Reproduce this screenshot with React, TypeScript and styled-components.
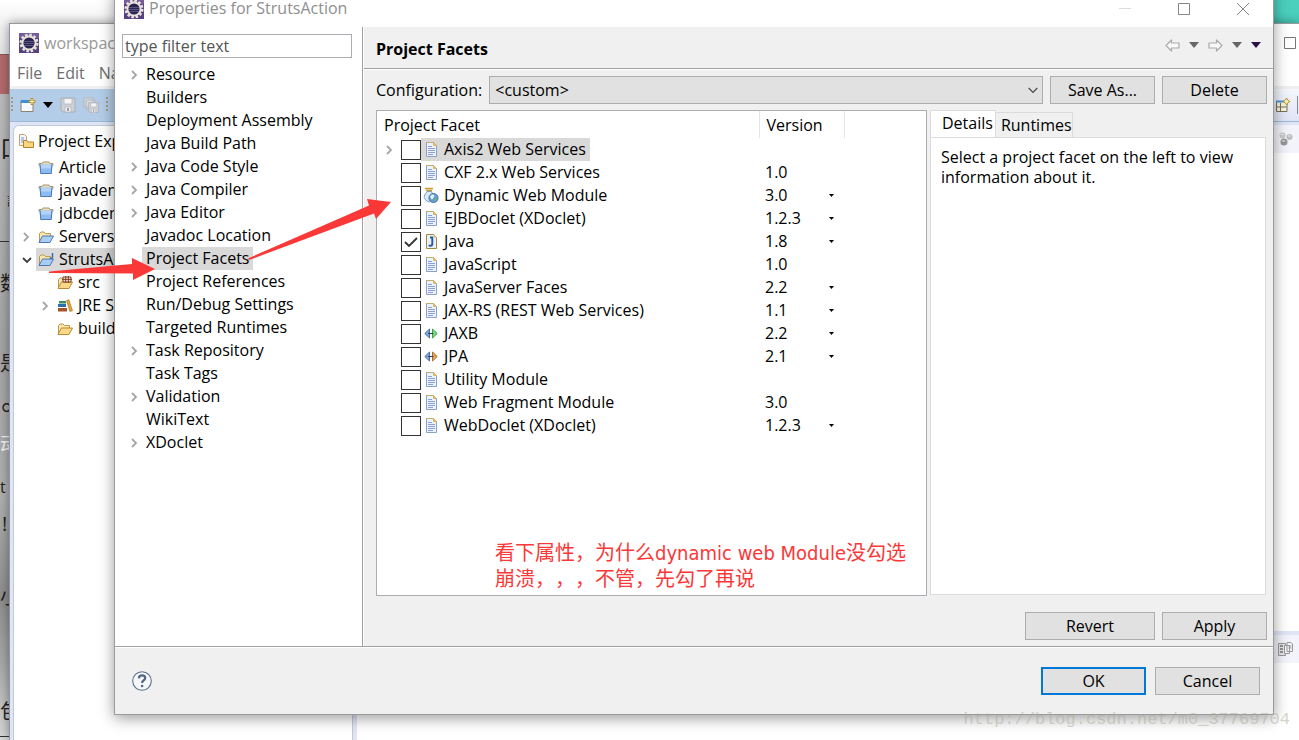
import React, { useState } from "react";
import styled, { createGlobalStyle, css } from "styled-components";

const Global = createGlobalStyle`
  * { box-sizing: border-box; }
  html, body { margin: 0; }
  body {
    font-family: "Open Sans", "Noto Sans", "Noto Sans CJK SC", sans-serif;
    font-size: 16px;
    line-height: 23px;
    color: #000;
  }
  button, input, select { font: inherit; color: inherit; margin: 0; }
  ul { list-style: none; margin: 0; padding: 0; }
`;

const Desktop = styled.div`
  position: relative;
  min-height: 100vh;
  overflow: hidden;
  background: #fff;
`;

/* ---------- page that lies behind everything ---------- */

const WebPage = styled.div`
  display: flex;
  flex-direction: column;
  min-height: 100vh;
`;

const PageTop = styled.div`
  display: flex;
  justify-content: flex-end;
  height: 54px;
  background: linear-gradient(#fff, #e4e4e4);
`;

const Teal = styled.div`
  width: 120px;
  height: 24px;
  background: #4bd0be;
`;

const PageBanner = styled.div`
  height: 40px;
  background: #b36b6b;
  border-top: 1px solid #8d5555;
`;

const PageText = styled.div`
  flex: 1;
  white-space: nowrap;
  background: linear-gradient(#bcbcbc, #a4a4a4 40%, #b0b0b0 62%, #8e8e8e 78%, #a8a8a8 88%, #d8d8d8);
`;

const PageLine = styled.div<{
  $h: number;
  $above?: number;
  $size?: number;
  $pad?: number;
  $light?: boolean;
  $rule?: boolean;
}>`
  display: flex;
  align-items: center;
  height: ${(p) => p.$h}px;
  margin-top: ${(p) => p.$above ?? 0}px;
  padding-left: ${(p) => p.$pad ?? 0}px;
  font-size: ${(p) => p.$size ?? 20}px;
  color: ${(p) => (p.$light ? "#f4f4f4" : "#222")};
  border-bottom: ${(p) => (p.$rule ? "1px solid #333" : "0")};
`;

/* ---------- workspace window ---------- */

const Workspace = styled.section`
  position: absolute;
  top: 23px;
  left: 9px;
  right: 0;
  bottom: 0;
  display: flex;
  flex-direction: column;
  background: #fff;
  border-top: 1px solid #9a9a9a;
  border-left: 1px solid #8d94a8;
  box-shadow: 0 0 10px rgba(0, 0, 0, 0.4);
`;

const WsTitle = styled.header`
  display: flex;
  align-items: center;
  justify-content: space-between;
  height: 38px;
  padding: 0 3px 0 9px;
  color: #999;
`;

const IconText = styled.span<{ $gap: number }>`
  display: flex;
  align-items: center;
  gap: ${(p) => p.$gap}px;
`;

const Menu = styled.nav`
  display: flex;
  gap: 14px;
  height: 24px;
  padding-left: 7px;
  color: #6d6d6d;
`;

const Toolbar = styled.div`
  display: flex;
  align-items: center;
  justify-content: space-between;
  height: 36px;
  padding: 0 1px;
  border-top: 3px solid #f0f0f0;
  border-bottom: 1px solid #9db9da;
  background: linear-gradient(90deg, #b3cde8 60%, transparent 85%), linear-gradient(#f5f7fd, #dfe4f5);
`;

const ToolGroup = styled.div`
  display: flex;
  align-items: center;
  gap: 7px;
`;

const Handle = styled.span`
  width: 2px;
  height: 16px;
  background: repeating-linear-gradient(#a89b78 0 2px, transparent 2px 4px);
`;

const ToolRule = styled.span`
  width: 1px;
  height: 18px;
  background: #8a8a96;
`;

const WsBody = styled.div`
  flex: 1;
  display: grid;
  grid-template-columns: 340px 1fr;
  gap: 4px;
  padding: 3px 0 0 3px;
  background: #e0e5f6;
`;

const Explorer = styled.div`
  background: #fff;
  border: 1px solid #c3c9d8;
  border-bottom: 0;
  border-radius: 6px 0 0 0;
`;

const ExplorerTab = styled.div`
  display: flex;
  align-items: center;
  gap: 4px;
  height: 30px;
  padding-left: 4px;
  white-space: nowrap;
`;

const WsRow = styled.li<{ $child?: boolean }>`
  display: flex;
  align-items: center;
  height: 23px;
  padding-left: ${(p) => (p.$child ? 27 : 8)}px;
  white-space: nowrap;
`;

const WsLabel = styled.span<{ $on?: boolean }>`
  display: flex;
  align-items: center;
  gap: 5px;
  padding: 0 4px 0 2px;
  background: ${(p) => (p.$on ? "#d9d9d9" : "transparent")};
`;

const Twisty = styled.span`
  display: flex;
  flex: none;
  align-items: center;
  width: 14px;
`;

const WsEditors = styled.div`
  display: flex;
  flex-direction: column;
`;

const EditorPane = styled.div<{ $grow?: boolean }>`
  ${(p) => (p.$grow ? css`flex: 1; margin-bottom: 4px;` : css`height: 105px;`)}
  background: #fff;
`;

const PaneTabs = styled.div`
  display: flex;
  align-items: center;
  justify-content: flex-end;
  height: 28px;
  padding-right: 6px;
  background: #f3f4fb;
`;

/* ---------- dialog ---------- */

const Dialog = styled.section`
  position: absolute;
  top: -11px;
  left: 114px;
  right: 25px;
  background: #f0f0f0;
  border: 1px solid #9b9b9b;
  box-shadow: 0 3px 14px rgba(0, 0, 0, 0.4);
`;

const TitleBar = styled.header`
  display: flex;
  align-items: center;
  justify-content: space-between;
  height: 37px;
  padding: 0 23px 0 9px;
  background: #fff;
  color: #8f8f8f;
`;

const WindowControls = styled.div`
  display: flex;
  gap: 45px;
`;

const PlainButton = styled.button`
  display: flex;
  align-items: center;
  justify-content: center;
  padding: 0;
  border: 0;
  background: none;
`;

const Columns = styled.div`
  display: grid;
  grid-template-columns: 248px minmax(0, 1fr);
  border-bottom: 1px solid #a0a0a0;
`;

const Side = styled.aside`
  padding: 7px 10px 0 7px;
  background: #fff;
  border-right: 1px solid #a0a0a0;
`;

const Filter = styled.input`
  display: block;
  width: 100%;
  height: 24px;
  margin-bottom: 5px;
  padding: 0 2px;
  border: 1px solid #abadb3;
  outline: 0;
  color: #555;
`;

const NavRow = styled.li`
  display: flex;
  align-items: center;
  height: 23px;
  padding-left: 8px;
`;

const NavLink = styled.a<{ $on?: boolean }>`
  padding: 0 4px;
  margin-left: -2px;
  color: #000;
  text-decoration: none;
  background: ${(p) => (p.$on ? "#d9d9d9" : "transparent")};
`;

const Main = styled.main`
  border-left: 1px solid #fff;
`;

const PageHead = styled.div`
  display: flex;
  align-items: center;
  justify-content: space-between;
  height: 42px;
  padding: 3px 12px 0;
  border-bottom: 1px solid #a0a0a0;
`;

const Heading = styled.h1`
  margin: 0;
  font-size: 16px;
  font-weight: 700;
`;

const History = styled.div`
  display: flex;
  align-items: center;
  gap: 9px;
  padding-bottom: 8px;
`;

const Form = styled.div`
  padding: 6px 6px 6px 12px;
  border-top: 1px solid #fff;
`;

const ConfigRow = styled.div`
  display: flex;
  align-items: center;
  gap: 7px;
  margin-bottom: 6px;
`;

const SelectWrap = styled.div`
  position: relative;
  flex: 1;
`;

const Select = styled.select`
  display: block;
  width: 100%;
  height: 28px;
  padding: 0 5px;
  appearance: none;
  border: 1px solid #adadad;
  border-radius: 0;
  background: #e1e1e1;
`;

const SelectArrow = styled.span`
  position: absolute;
  top: 11px;
  right: 5px;
  display: flex;
  pointer-events: none;
`;

const Push = styled.button<{ $wide?: boolean; $primary?: boolean }>`
  width: ${(p) => (p.$wide ? 130 : 105)}px;
  height: 28px;
  padding: 0;
  border: ${(p) => (p.$primary ? "2px solid #0078d7" : "1px solid #adadad")};
  background: #e1e1e1;
`;

const Panels = styled.div`
  display: grid;
  grid-template-columns: minmax(0, 1fr) 337px;
  gap: 3px;
  min-height: 486px;
`;

const TableBox = styled.div`
  position: relative;
  border: 1px solid #abadb3;
  background: #fff;
`;

const FacetTable = styled.table`
  width: 467px;
  border-collapse: collapse;
  table-layout: fixed;

  th, td { padding: 0; }
  th {
    height: 27px;
    padding: 1px 0 0 7px;
    text-align: left;
    font-weight: 400;
  }
`;

const HeadCell = styled.th<{ $w: number }>`
  width: ${(p) => p.$w}px;
  border-right: 1px solid #e5e5e5;
`;

const FacetCell = styled.div`
  display: flex;
  align-items: center;
  height: 23px;
  padding-left: 8px;
`;

const Check = styled.input`
  flex: none;
  width: 20px;
  height: 20px;
  margin: 0 0 0 2px;
  appearance: none;
  border: 1px solid #333;
  background: #fff;

  &:checked {
    background: #fff url("data:image/svg+xml,%3Csvg xmlns='http://www.w3.org/2000/svg' viewBox='0 0 18 18'%3E%3Cpath d='M3 9l4 4 8-8' fill='none' stroke='%23333' stroke-width='1.8'/%3E%3C/svg%3E") center / 18px no-repeat;
  }
`;

const FacetLabel = styled.label<{ $on?: boolean }>`
  display: flex;
  align-items: center;
  gap: 5px;
  height: 23px;
  padding: 0 4px 0 2px;
  background: ${(p) => (p.$on ? "#d9d9d9" : "transparent")};
`;

const VersionCell = styled.div`
  display: flex;
  align-items: center;
  justify-content: space-between;
  height: 23px;
  padding: 0 10px 0 6px;
`;

const Note = styled.p`
  position: absolute;
  left: 118px;
  bottom: 3px;
  margin: 0;
  font-family: "DejaVu Sans Condensed", "Noto Sans CJK SC", sans-serif;
  font-size: 20px;
  line-height: 26px;
  text-spacing-trim: space-all;
  white-space: nowrap;
  color: #fb3838;
`;

const Details = styled.div`
  display: flex;
  flex-direction: column;
`;

const TabList = styled.div`
  display: flex;
  align-items: flex-end;
  height: 28px;
  margin-bottom: -1px;
`;

const Tab = styled.button<{ $on?: boolean }>`
  height: ${(p) => (p.$on ? 28 : 26)}px;
  padding: ${(p) => (p.$on ? "0 2px 2px 11px" : "0 0 0 5px")};
  border: 1px solid #dcdcdc;
  border-left-width: ${(p) => (p.$on ? 1 : 0)}px;
  border-bottom-color: ${(p) => (p.$on ? "#fff" : "#dcdcdc")};
  background: ${(p) => (p.$on ? "#fff" : "#f0f0f0")};
`;

const TabPanel = styled.div`
  flex: 1;
  margin: 0 1px 1px 0;
  padding: 9px 10px;
  border: 1px solid #dcdcdc;
  background: #fff;
  line-height: 20px;
`;

const Actions = styled.div`
  display: flex;
  justify-content: flex-end;
  gap: 7px;
  margin-top: 16px;
`;

const Footer = styled.footer`
  display: flex;
  align-items: center;
  height: 67px;
  padding: 0 13px 0 17px;
  gap: 9px;
  border-top: 1px solid #fff;
`;

const Spacer = styled.span`
  flex: 1;
`;

const Arrows = styled.svg`
  position: absolute;
  top: 0;
  left: 0;
  pointer-events: none;
`;

const Watermark = styled.span`
  position: absolute;
  right: 9px;
  bottom: 9px;
  font-family: "Liberation Mono", monospace;
  font-size: 17px;
  color: rgba(170, 170, 155, 0.5);
`;

/* ---------- drawings ---------- */

const EclipseIcon = () => (
  <svg width="20" height="20" viewBox="0 0 20 20">
    <rect width="20" height="20" fill="#55417f" />
    <rect width="20" height="5" fill="#8a6fae" opacity=".6" />
    <circle cx="10" cy="10" r="8.3" fill="none" stroke="#e8e4dc" strokeWidth="2.4" strokeDasharray="2.6 1.75" />
    <circle cx="10" cy="10" r="6.600" fill="#2b2350" stroke="#e8e4dc" strokeWidth="2" />
    <path d="M5 8.5h10M4.800 10.5h10.400M5 12.5h10" stroke="#6b638f" strokeWidth=".8" />
  </svg>
);

const Chevron = ({ open }: { open?: boolean }) =>
  open ? (
    <svg width="10" height="8" viewBox="0 0 10 8">
      <path d="M1 2l4 4 4-4" fill="none" stroke="#404040" strokeWidth="1.8" />
    </svg>
  ) : (
    <svg width="8" height="10" viewBox="0 0 8 10">
      <path d="M2 1l4 4-4 4" fill="none" stroke="#a6a6a6" strokeWidth="1.8" />
    </svg>
  );

const DocIcon = () => (
  <svg width="13" height="15" viewBox="0 0 13 15">
    <path d="M1.5.5h7l3 3v11h-10z" fill="#eaf3fd" stroke="#8da0c6" />
    <path d="M1 .5h7.5l3 3" fill="none" stroke="#c5ae6c" />
    <path d="M8.5.5v3h3z" fill="#e6c06a" stroke="#c9a64c" strokeWidth=".6" />
    <path d="M3 4.5h4M3 6.5h7M3 8.5h7M3 10.5h7M3 12.5h5" stroke="#8f9fd0" />
  </svg>
);

const JavaIcon = () => (
  <svg width="13" height="15" viewBox="0 0 13 15">
    <path d="M1.5.5h7l3 3v11h-10z" fill="#e8f1fc" stroke="#a5863c" />
    <path d="M8.5.5v3h3z" fill="#e6c06a" />
    <path d="M5 3.5h3M7.3 3.5v6.3q0 2-1.8 2-1 0-1.8-.7" fill="none" stroke="#255a9c" strokeWidth="1.9" />
  </svg>
);

const WebIcon = () => (
  <svg width="16" height="17" viewBox="0 0 16 17">
    <path d="M2 1.5h8M3 3.500h6" stroke="#c89d2f" strokeWidth="1.5" />
    <path d="M4 4.500q0 1.600-2 2.600a5 5 0 1 0 8.500 0q-2-1-2-2.600z" fill="#dbe9f8" stroke="#829fc8" />
    <circle cx="10.5" cy="11" r="4.6" fill="#5f9bd5" stroke="#40699e" strokeWidth=".8" />
    <path d="M7 9.600q2-3.200 4.200-1.400.8 2-1 2.600-.4 2.200-1.800 1.400z" fill="#e4f2ea" />
    <path d="M11.700 11.200l2.200-.4-.8 2.600-1.600.6z" fill="#6fb56b" />
  </svg>
);

const LinkIcon = ({ right, edge }: { right: string; edge: string }) => (
  <svg width="14" height="11" viewBox="0 0 14 11">
    <path d="M.8 5.500l4.700-4.500v9z" fill="#7fa8e0" stroke="#3d62a0" strokeWidth=".9" />
    <path d="M13.200 5.500L8.500 1v9z" fill={right} stroke={edge} strokeWidth=".9" />
    <path d="M4 5.500h5.500" stroke="#333f60" strokeWidth="1.100" />
  </svg>
);

const ClosedProject = () => (
  <svg width="16" height="14" viewBox="0 0 16 14">
    <path d="M1 4.500V2.500h3L5 1h6l1 1.500h3v2" fill="#e9dfc4" stroke="#a39470" />
    <path d="M1.500 3.500h13L13.500 13h-11z" fill="#8dbcf0" />
    <path d="M2 3.500L2.800 12.500h10.400L14 3.500" fill="none" stroke="#4a78bd" />
    <path d="M3 4h10v3.500H3z" fill="#b4d5f9" />
  </svg>
);

const Folder = ({ blue, mark }: { blue?: boolean; mark?: "j" | "grid" }) => {
  const line = blue ? "#4f76b5" : "#b98a33";
  return (
    <svg width="16" height="14" viewBox="0 0 16 14">
      <path d="M1.5 12V3.5l1.5-1.5h3l1.5 1.5h5V6" fill="#fbe8ab" stroke="#b79854" />
      <path d="M1 12.5L4.5 6h11l-3.5 6.5z" fill={blue ? "#a9cef5" : "#fbd988"} stroke={line} />
      {mark === "j" && <path d="M14.5 0v4q0 1.8-2.8 1.3" fill="none" stroke="#3568b0" strokeWidth="1.4" />}
      {mark === "grid" && (
        <path d="M6 1h8v5H6zM8.7 0v7M11.4 0v7M5 3.4h10" fill="#f7e3cd" stroke="#7a3f25" strokeWidth="1" />
      )}
    </svg>
  );
};

const BooksIcon = () => (
  <svg width="16" height="14" viewBox="0 0 16 14">
    <path d="M2 2h7v2.5H2z" fill="#3d8b63" />
    <path d="M1 5h8v3H1z" fill="#2d6ea8" />
    <path d="M1 9h9v3.5H1z" fill="#a3562b" />
    <path d="M9.5 1.5l2.4-.8 3.6 11-2.6.8z" fill="#e2a43b" stroke="#a96c16" strokeWidth=".6" />
  </svg>
);

const ExplorerIcon = () => (
  <svg width="16" height="16" viewBox="0 0 16 16">
    <path d="M1.5 1.5h5l2 2v9h-7z" fill="#eef5fd" stroke="#c2a468" />
    <path d="M3 5h3M3 7h3M3 9h3" stroke="#7e9bd0" />
    <path d="M5.500 14.500v-7h3.500l1 1.500h5.500v5.500z" fill="#fbd67c" stroke="#b5832d" />
  </svg>
);

const NewIcon = () => (
  <svg width="16" height="14" viewBox="0 0 16 14">
    <path d="M1 2.500h12v11H1z" fill="#f5f9fe" stroke="#8b8468" />
    <path d="M1 2h10v3H1z" fill="#3f90d2" />
    <path d="M12 0v7M8.500 3.500h7" stroke="#b88d23" strokeWidth="2.600" />
    <path d="M12 1v5M9.500 3.500h5" stroke="#fff3bd" />
  </svg>
);

const SaveIcon = ({ all }: { all?: boolean }) => (
  <svg width="16" height="16" viewBox="0 0 16 16">
    {all && <path d="M1 1h9v9H1zM3 3h9v9H3z" fill="#d9dde2" stroke="#b2b6bb" />}
    <g transform={all ? "translate(5 5) scale(.7)" : undefined}>
      <path d="M1 1h14v14H3l-2-2z" fill="#cdd1d6" stroke="#aaaeb4" />
      <path d="M4 1.500h8V7H4zM5 10h6v5H5z" fill="#f3f4f5" stroke="#b2b6bb" strokeWidth=".8" />
      <path d="M7 11h2v3H7z" fill="#9a9ea5" />
    </g>
  </svg>
);

const ScreenIcon = () => (
  <svg width="16" height="14" viewBox="0 0 16 14">
    <path d="M0 1h15v9H0z" fill="#3f6fb4" />
    <path d="M2 3h11v5H2z" fill="#cfe2f8" />
  </svg>
);

const Triangle = ({ color = "#000", small }: { color?: string; small?: boolean }) => (
  <svg width={small ? 5 : 10} height={small ? 3 : 6} viewBox="0 0 10 6">
    <path d="M0 0h10L5 6z" fill={color} />
  </svg>
);

const HistoryArrow = ({ flip }: { flip?: boolean }) => (
  <svg width="15" height="13" viewBox="0 0 15 13">
    <path
      d="M1 6.500L6.500 1v3H14v5H6.500v3z"
      transform={flip ? "matrix(-1 0 0 1 15 0)" : undefined}
      fill="#f8f8f8"
      stroke="#aaa"
      strokeWidth="1.200"
      strokeLinejoin="round"
    />
  </svg>
);

const PerspectiveIcon = () => (
  <svg width="14" height="14" viewBox="0 0 14 14">
    <path d="M.5 3.500h10.500v10H.5z" fill="#f7f4e2" stroke="#787050" />
    <path d="M0 2.500h8v2H0z" fill="#4a94d8" />
    <path d="M4.500 5v8M.5 9h10" stroke="#787050" />
    <path d="M10.500 0l1.300 2.300L14 3.500l-2.200 1.300L10.500 7 9.200 4.800 7 3.500l2.200-1.200z" fill="#fff3bb" stroke="#b8922c" />
  </svg>
);

const BallsIcon = () => (
  <svg width="14" height="14" viewBox="0 0 14 14">
    <circle cx="3.500" cy="3.500" r="3" fill="#c9c9c9" />
    <circle cx="10.500" cy="5" r="3" fill="#bdbdbd" />
    <circle cx="5" cy="10" r="3.500" fill="#979797" />
    <path d="M1.500 2.500h3M9 4h3M3 9h3" stroke="#eee" />
  </svg>
);

const PagesIcon = () => (
  <svg width="15" height="15" viewBox="0 0 15 15">
    <path d="M.5 1.500h7v12h-7z" fill="#e6e6e6" stroke="#999" />
    <path d="M2 4h3M2 7h3M2 10h3" stroke="#777" strokeWidth="1.500" />
    <path d="M6.500 3.500h5v8h-5zM9 .5h4l1.500 1.500v7.500H9z" fill="#f6f6f6" stroke="#999" />
    <path d="M10.500 4h3M10.500 6h3" stroke="#999" />
  </svg>
);

const HelpIcon = () => (
  <svg width="20" height="20" viewBox="0 0 20 20">
    <circle cx="10" cy="10" r="9.300" fill="#f6f7f9" stroke="#5c6e8e" strokeWidth="1.100" />
    <path d="M6.800 7.400q.2-3 3.300-3 3.100 0 3.100 2.600 0 1.500-1.700 2.500-1.400.8-1.400 2.600" fill="none" stroke="#52658a" strokeWidth="2.200" />
    <circle cx="10.100" cy="15" r="1.300" fill="#52658a" />
  </svg>
);

/* ---------- data ---------- */

const pages: { name: string; kids?: boolean }[] = [
  { name: "Resource", kids: true },
  { name: "Builders" },
  { name: "Deployment Assembly" },
  { name: "Java Build Path" },
  { name: "Java Code Style", kids: true },
  { name: "Java Compiler", kids: true },
  { name: "Java Editor", kids: true },
  { name: "Javadoc Location" },
  { name: "Project Facets" },
  { name: "Project References" },
  { name: "Run/Debug Settings" },
  { name: "Targeted Runtimes" },
  { name: "Task Repository", kids: true },
  { name: "Task Tags" },
  { name: "Validation", kids: true },
  { name: "WikiText" },
  { name: "XDoclet", kids: true },
];

type Facet = { name: string; version?: string; pick?: boolean; icon?: React.ReactNode; kids?: boolean };

const facets: Facet[] = [
  { name: "Axis2 Web Services", kids: true },
  { name: "CXF 2.x Web Services", version: "1.0" },
  { name: "Dynamic Web Module", version: "3.0", pick: true, icon: <WebIcon /> },
  { name: "EJBDoclet (XDoclet)", version: "1.2.3", pick: true },
  { name: "Java", version: "1.8", pick: true, icon: <JavaIcon /> },
  { name: "JavaScript", version: "1.0" },
  { name: "JavaServer Faces", version: "2.2", pick: true },
  { name: "JAX-RS (REST Web Services)", version: "1.1", pick: true },
  { name: "JAXB", version: "2.2", pick: true, icon: <LinkIcon right="#7fdc7a" edge="#2f9a3a" /> },
  { name: "JPA", version: "2.1", pick: true, icon: <LinkIcon right="#e8a552" edge="#9c6420" /> },
  { name: "Utility Module" },
  { name: "Web Fragment Module", version: "3.0" },
  { name: "WebDoclet (XDoclet)", version: "1.2.3", pick: true },
];

type Node = { name: string; icon: React.ReactNode; child?: boolean; twisty?: "open" | "closed"; on?: boolean };

const projects: Node[] = [
  { name: "Article", icon: <ClosedProject /> },
  { name: "javademo", icon: <ClosedProject /> },
  { name: "jdbcdemo", icon: <ClosedProject /> },
  { name: "Servers", icon: <Folder blue />, twisty: "closed" },
  { name: "StrutsAction", icon: <Folder blue mark="j" />, twisty: "open", on: true },
  { name: "src", icon: <Folder mark="grid" />, child: true },
  { name: "JRE Sys", icon: <BooksIcon />, child: true, twisty: "closed" },
  { name: "build", icon: <Folder />, child: true },
];

/* ---------- parts ---------- */

const IconSlot = styled.span`
  display: flex;
  flex: none;
  align-items: center;
  justify-content: center;
  width: 16px;
`;

function BackgroundPage() {
  return (
    <WebPage>
      <PageTop><Teal /></PageTop>
      <PageBanner />
      <PageText>
        <PageLine $above={0} $h={106} $size={24}>口</PageLine>
        <PageLine $h={1} $pad={7} $size={13}>該</PageLine>
        <PageLine $h={41} $rule />
        <PageLine $h={82}>数</PageLine>
        <PageLine $above={9} $h={60}>是</PageLine>
        <PageLine $h={22}>♂</PageLine>
        <PageLine $h={58} $light>动</PageLine>
        <PageLine $h={28} $size={16}>t</PageLine>
        <PageLine $h={44} $pad={2}>!</PageLine>
        <PageLine $above={21} $h={60}>小</PageLine>
        <PageLine $above={61} $h={50} $rule>包</PageLine>
      </PageText>
    </WebPage>
  );
}

function WorkspaceWindow() {
  return (
    <Workspace>
      <WsTitle>
        <IconText $gap={5}><EclipseIcon />workspace</IconText>
        <svg width="12" height="12" viewBox="0 0 12 12"><path d="M.5.5h11v11H.5z" fill="none" stroke="#777" /></svg>
      </WsTitle>
      <Menu><span>File</span><span>Edit</span><span>Nav</span></Menu>
      <Toolbar>
        <ToolGroup>
          <Handle /><NewIcon /><Triangle /><SaveIcon /><SaveIcon all /><Handle /><ScreenIcon />
        </ToolGroup>
        <ToolGroup><PerspectiveIcon /><ToolRule /></ToolGroup>
      </Toolbar>
      <WsBody>
        <Explorer>
          <ExplorerTab><ExplorerIcon />Project Explorer</ExplorerTab>
          <ul>
            {projects.map((p) => (
              <WsRow key={p.name} $child={p.child}>
                <Twisty>{p.twisty && <Chevron open={p.twisty === "open"} />}</Twisty>
                <WsLabel $on={p.on}>{p.icon}{p.name}</WsLabel>
              </WsRow>
            ))}
          </ul>
        </Explorer>
        <WsEditors>
          <EditorPane $grow><PaneTabs><BallsIcon /></PaneTabs></EditorPane>
          <EditorPane><PaneTabs><PagesIcon /></PaneTabs></EditorPane>
        </WsEditors>
      </WsBody>
    </Workspace>
  );
}

function FacetRow({ facet, index, checked, onToggle }: { facet: Facet; index: number; checked: boolean; onToggle: () => void }) {
  const id = `facet-${index}`;
  return (
    <tr>
      <td>
        <FacetCell>
          <Twisty>{facet.kids && <Chevron />}</Twisty>
          <Check id={id} type="checkbox" checked={checked} onChange={onToggle} />
          <FacetLabel htmlFor={id} $on={index === 0}>
            <IconSlot>{facet.icon ?? <DocIcon />}</IconSlot>
            {facet.name}
          </FacetLabel>
        </FacetCell>
      </td>
      <td>
        <VersionCell>
          {facet.version}
          {facet.pick && (
            <PlainButton type="button" aria-label={`Change version of ${facet.name}`}><Triangle small /></PlainButton>
          )}
        </VersionCell>
      </td>
    </tr>
  );
}

function PropertiesDialog() {
  const [picked, setPicked] = useState<string[]>(["Java"]);
  const toggle = (name: string) =>
    setPicked((old) => (old.includes(name) ? old.filter((n) => n !== name) : [...old, name]));

  return (
    <Dialog role="dialog" aria-label="Properties for StrutsAction">
      <TitleBar>
        <IconText $gap={5}><EclipseIcon />Properties for StrutsAction</IconText>
        <WindowControls>
          <PlainButton aria-label="Minimize">
            <svg width="14" height="14" viewBox="0 0 14 14"><path d="M1 6.500h12" stroke="#ddd" /></svg>
          </PlainButton>
          <PlainButton aria-label="Maximize">
            <svg width="14" height="14" viewBox="0 0 14 14"><path d="M1.500 1.500h11v11h-11z" fill="none" stroke="#888" /></svg>
          </PlainButton>
          <PlainButton aria-label="Close">
            <svg width="14" height="14" viewBox="0 0 14 14"><path d="M1 1l12 12M13 1L1 13" stroke="#888" /></svg>
          </PlainButton>
        </WindowControls>
      </TitleBar>
      <Columns>
        <Side>
          <Filter aria-label="Filter" defaultValue="type filter text" />
          <ul>
            {pages.map((p) => (
              <NavRow key={p.name}>
                <Twisty>{p.kids && <Chevron />}</Twisty>
                <NavLink href="#" $on={p.name === "Project Facets"}>{p.name}</NavLink>
              </NavRow>
            ))}
          </ul>
        </Side>
        <Main>
          <PageHead>
            <Heading>Project Facets</Heading>
            <History>
              <PlainButton aria-label="Back"><HistoryArrow /></PlainButton>
              <PlainButton aria-label="Back history"><Triangle color="#666" /></PlainButton>
              <PlainButton aria-label="Forward"><HistoryArrow flip /></PlainButton>
              <PlainButton aria-label="Forward history"><Triangle color="#666" /></PlainButton>
              <PlainButton aria-label="View menu"><Triangle color="#2d1248" /></PlainButton>
            </History>
          </PageHead>
          <Form>
            <ConfigRow>
              <label htmlFor="configuration">Configuration:</label>
              <SelectWrap>
                <Select id="configuration"><option>&lt;custom&gt;</option></Select>
                <SelectArrow>
                  <svg width="10" height="7" viewBox="0 0 10 7"><path d="M.7 1L5 5.500 9.300 1" fill="none" stroke="#444" strokeWidth="1.100" /></svg>
                </SelectArrow>
              </SelectWrap>
              <Push>Save As...</Push>
              <Push>Delete</Push>
            </ConfigRow>
            <Panels>
              <TableBox>
                <FacetTable>
                  <thead>
                    <tr><HeadCell $w={382}>Project Facet</HeadCell><HeadCell $w={85}>Version</HeadCell></tr>
                  </thead>
                  <tbody>
                    {facets.map((f, i) => (
                      <FacetRow key={f.name} facet={f} index={i} checked={picked.includes(f.name)} onToggle={() => toggle(f.name)} />
                    ))}
                  </tbody>
                </FacetTable>
                <Note>看下属性，为什么dynamic web Module没勾选<br />崩溃，，，不管，先勾了再说</Note>
              </TableBox>
              <Details>
                <TabList role="tablist">
                  <Tab role="tab" aria-selected $on>Details</Tab>
                  <Tab role="tab" aria-selected={false}>Runtimes</Tab>
                </TabList>
                <TabPanel role="tabpanel">Select a project facet on the left to view information about it.</TabPanel>
              </Details>
            </Panels>
            <Actions>
              <Push $wide>Revert</Push>
              <Push>Apply</Push>
            </Actions>
          </Form>
        </Main>
      </Columns>
      <Footer>
        <PlainButton aria-label="Help"><HelpIcon /></PlainButton>
        <Spacer />
        <Push $primary>OK</Push>
        <Push>Cancel</Push>
      </Footer>
    </Dialog>
  );
}

export default function App() {
  return (
    <Desktop>
      <Global />
      <BackgroundPage />
      <WorkspaceWindow />
      <PropertiesDialog />
      <Arrows width="400" height="290" viewBox="0 0 400 290" aria-hidden="true">
        <path d="M49 271.500L132 264V258L155 269 133 280V273.500L49 273z" fill="#fb3838" />
        <path d="M248 258.500L369 205.500 367 199 391 202 376 219 374 213.500 249 260z" fill="#fb3838" />
      </Arrows>
      <Watermark>http://blog.csdn.net/m0_37769704</Watermark>
    </Desktop>
  );
}
